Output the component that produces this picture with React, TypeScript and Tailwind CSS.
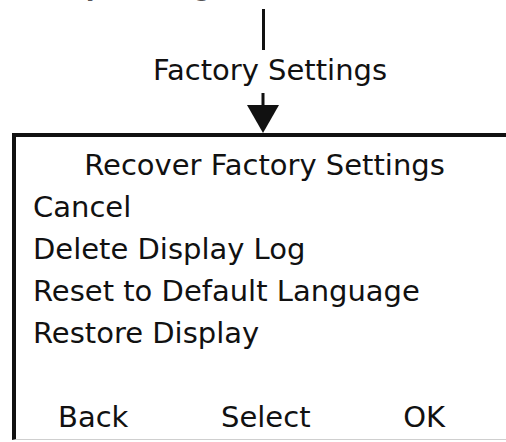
import React from 'react';

// Menu flow: Factory Settings -> Recover Factory Settings screen
const MENU_ITEMS = ['Cancel', 'Delete Display Log', 'Reset to Default Language', 'Restore Display'];

const FONT = { fontFamily: '"DejaVu Sans", "Liberation Sans", sans-serif' };

export default function App() {
  return (
    <div className="w-[506px] h-[442px] bg-white overflow-hidden text-[#111]" style={FONT}>
      {/* previous step label, cut off at the top edge */}
      <div className="h-[8px] overflow-hidden">
        <div className="-mt-[31px] text-[28px] leading-[34px] text-[#555] whitespace-nowrap">
          Factory Settings
        </div>
      </div>

      {/* connector + heading + arrow */}
      <div className="flex flex-col items-center w-[526px]">
        <div className="mt-[1px] h-[41px] w-[3px] bg-[#111]" />
        <div className="mt-[3px] ml-[14px] text-[29px] leading-[34px] whitespace-nowrap">Factory Settings</div>
        <svg className="mt-[6px]" width="34" height="40" viewBox="0 0 34 40">
          <rect x="15.5" y="0" width="3" height="14" fill="#111" />
          <polygon points="1,12 33,12 17,40" fill="#111" />
        </svg>
      </div>

      {/* device screen */}
      <div className="ml-[12px] w-[501px] h-[307px] border-l-4 border-t-4 border-[#111] border-b border-b-[#cfcfcf] pt-[7px] text-[29px] leading-[42px]">
        <div className="text-center whitespace-nowrap">Recover Factory Settings</div>
        <div className="pl-[17px]">
          {MENU_ITEMS.map(item => (
            <div key={item} className="whitespace-nowrap">{item}</div>
          ))}
          <div className="h-[42px]" />
        </div>
        <div className="flex justify-between pl-[42px] pr-[68px]">
          <span>Back</span>
          <span>Select</span>
          <span>OK</span>
        </div>
      </div>
    </div>
  );
}
